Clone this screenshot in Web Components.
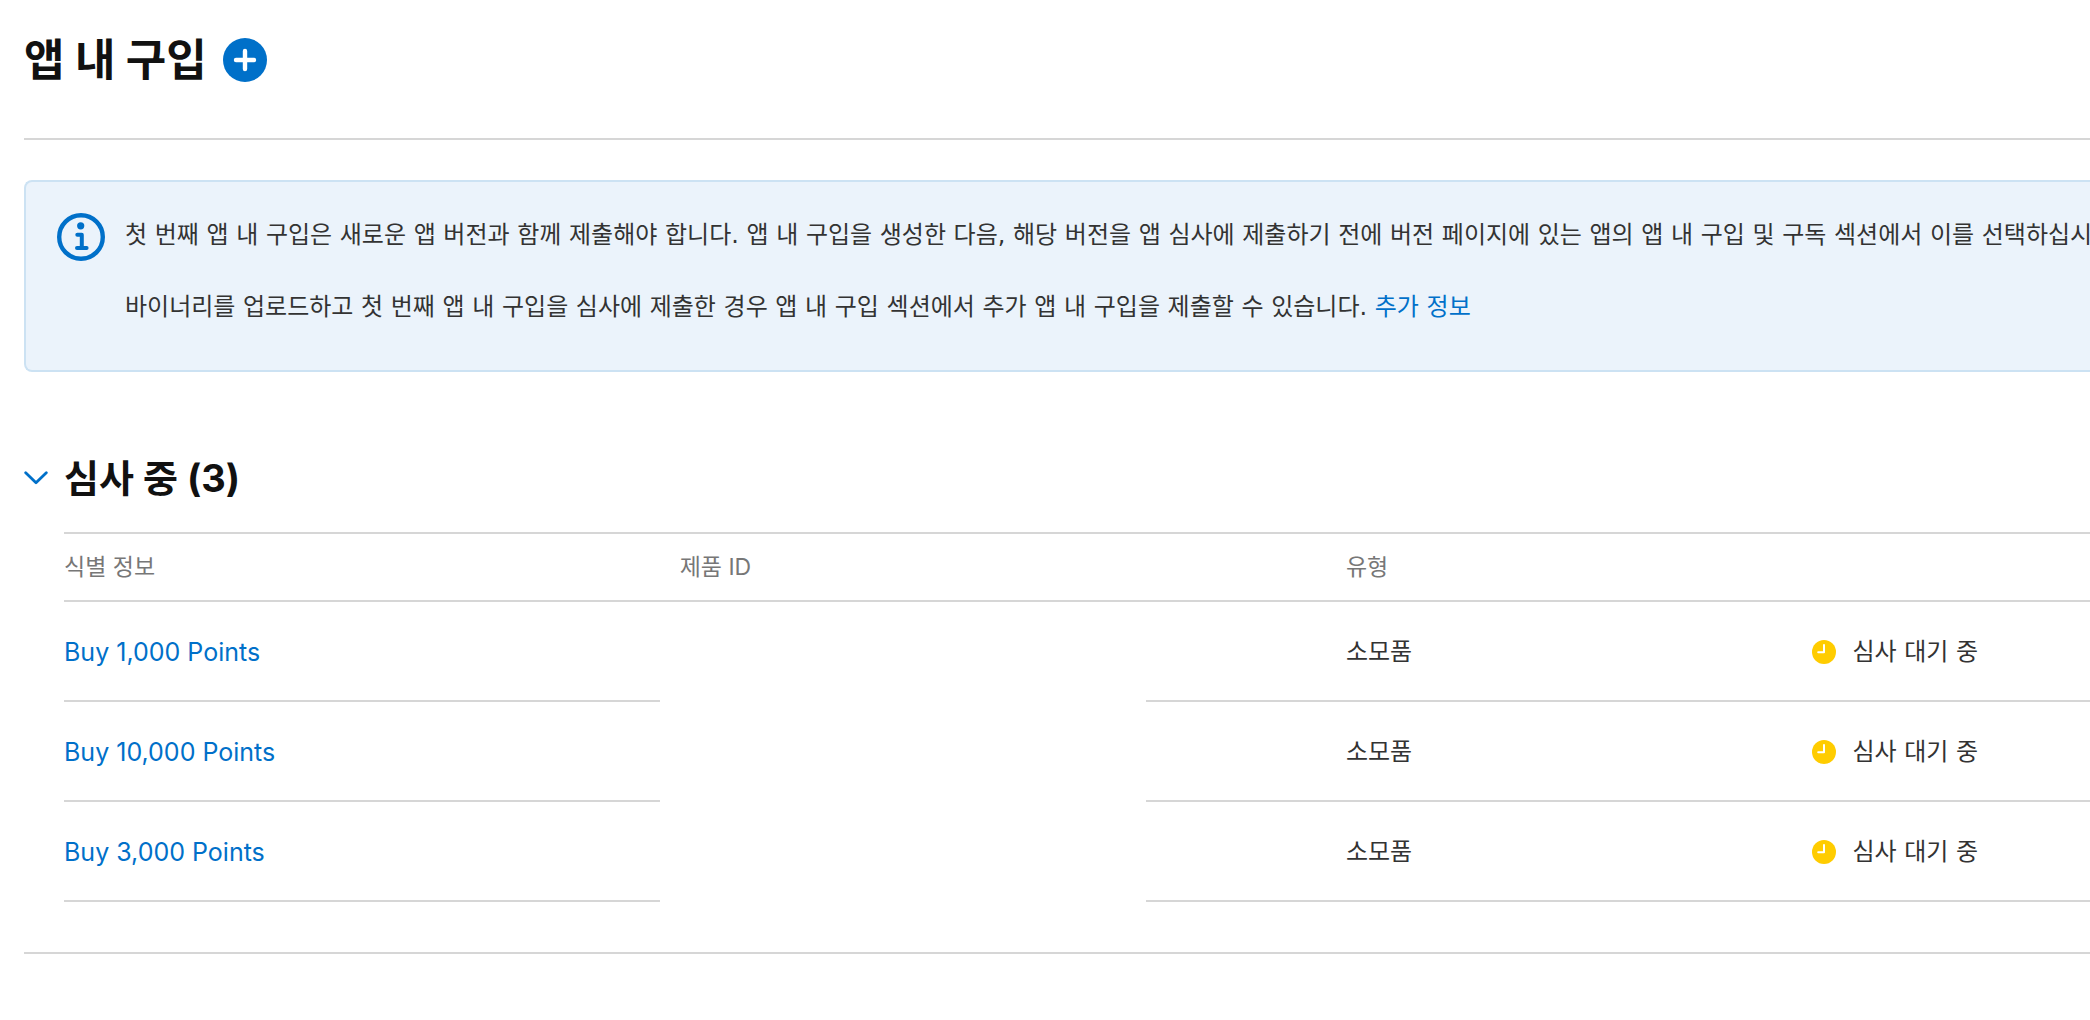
<!DOCTYPE html>
<html lang="ko">
<head>
<meta charset="utf-8">
<meta name="viewport" content="width=device-width, initial-scale=1">
<title>앱 내 구입</title>
<style>
	:root {
		--link-color: #0070c9;
		--line-color: #d6d6d6;
		--text-color: #333;
		--title-color: #111;
		--muted-color: #777;
		--latin-font: Inter, "Noto Sans CJK KR", sans-serif;
	}

	body {
		margin: 0;
		background: #fff;
		color: var(--text-color);
		font: 24px/36px "DejaVu Sans", "Noto Sans CJK KR", sans-serif;
		overflow-x: hidden;
	}

	a {
		color: var(--link-color);
		text-decoration: none;
	}

	main {
		padding: 30px 0 0 24px;
	}
</style>
</head>
<body>

<main>
	<page-heading>앱 내 구입</page-heading>

	<info-banner>
		<p>첫 번째 앱 내 구입은 새로운 앱 버전과 함께 제출해야 합니다. 앱 내 구입을 생성한 다음, 해당 버전을 앱 심사에 제출하기 전에 버전 페이지에 있는 앱의 앱 내 구입 및 구독 섹션에서 이를 선택하십시오.</p>
		<p>바이너리를 업로드하고 첫 번째 앱 내 구입을 심사에 제출한 경우 앱 내 구입 섹션에서 추가 앱 내 구입을 제출할 수 있습니다. <a href="#more">추가 정보</a></p>
	</info-banner>

	<collapsible-section>
		<span slot="title">심사 중 (3)</span>
		<purchase-table></purchase-table>
	</collapsible-section>
</main>

<script>
(function(){

	function makeTemplate(html) {
		const tmpl = document.createElement("template");
		tmpl.innerHTML = html;
		return tmpl;
	}

	const headingTmpl = makeTemplate(`
		<style>
			:host {
				display: flex;
				align-items: center;
				gap: 16px;
				padding-bottom: 48px;
				border-bottom: 2px solid var(--line-color);
			}

			h1 {
				margin: 0;
				color: var(--title-color);
				font-family: var(--latin-font);
				font-size: 44px;
				line-height: 60px;
				font-weight: 700;
			}

			button {
				display: block;
				padding: 0;
				border: 0;
				background: none;
				cursor: pointer;
			}

			svg {
				display: block;
				width: 44px;
				height: 44px;
			}
		</style>

		<h1><slot></slot></h1>
		<button type="button" aria-label="추가">
			<svg viewBox="0 0 44 44" aria-hidden="true">
				<circle cx="22" cy="22" r="22" fill="#0070c9"/>
				<path d="M22 13v18M13 22h18" stroke="#fff" stroke-width="4.4" stroke-linecap="round"/>
			</svg>
		</button>
	`);

	class PageHeading extends HTMLElement {
		constructor() {
			super();
			this.attachShadow({mode: "open"}).appendChild(headingTmpl.content.cloneNode(true));
		}
	}

	const bannerTmpl = makeTemplate(`
		<style>
			:host {
				display: flex;
				gap: 20px;
				margin-top: 40px;
				padding: 31px 0 45px 31px;
				border: 2px solid #cce2f3;
				border-right: 0;
				border-radius: 8px 0 0 8px;
				background: #ebf3fb;
				overflow: hidden;
			}

			svg {
				flex: none;
				width: 48px;
				height: 48px;
			}

			.content {
				display: grid;
				gap: 36px;
				min-width: 0;
				padding-top: 4px;
			}

			/* long lines run on past the window instead of wrapping */
			::slotted(p) {
				margin: 0;
				white-space: nowrap;
			}
		</style>

		<svg viewBox="0 0 48 48" aria-hidden="true" fill="none" stroke="#0070c9">
			<circle cx="24" cy="24" r="21.8" stroke-width="4.4"/>
			<circle cx="23.7" cy="12.8" r="3.6" fill="#0070c9" stroke="none"/>
			<path d="M20.3 21.7h4.5v13M20 34.9h9.6" stroke-width="4" stroke-linecap="round" stroke-linejoin="round"/>
		</svg>
		<div class="content"><slot></slot></div>
	`);

	class InfoBanner extends HTMLElement {
		constructor() {
			super();
			this.attachShadow({mode: "open"}).appendChild(bannerTmpl.content.cloneNode(true));
		}
	}

	const sectionTmpl = makeTemplate(`
		<style>
			:host {
				display: block;
				margin-top: 82px;
				padding-bottom: 50px;
				border-bottom: 2px solid var(--line-color);
			}

			h2 {
				margin: 0;
			}

			button {
				display: flex;
				align-items: center;
				gap: 16px;
				padding: 0;
				border: 0;
				background: none;
				color: var(--title-color);
				font-family: var(--latin-font);
				font-size: 38px;
				line-height: 48px;
				font-weight: 700;
				cursor: pointer;
			}

			svg {
				width: 24px;
				height: 14px;
			}

			.content {
				padding: 30px 0 0 40px;
			}
		</style>

		<h2>
			<button type="button" aria-expanded="true">
				<svg viewBox="0 0 24 14" aria-hidden="true">
					<path d="M1.7 1.7 12 11.7 22.3 1.7" fill="none" stroke="#0070c9" stroke-width="2.8" stroke-linecap="round" stroke-linejoin="round"/>
				</svg>
				<slot name="title"></slot>
			</button>
		</h2>
		<div class="content"><slot></slot></div>
	`);

	class CollapsibleSection extends HTMLElement {
		constructor() {
			super();
			this.attachShadow({mode: "open"}).appendChild(sectionTmpl.content.cloneNode(true));

			this.buttonEl = this.shadowRoot.querySelector("button");
			this.contentEl = this.shadowRoot.querySelector(".content");
			this.buttonEl.addEventListener("click", () => this._toggle());
		}

		_toggle() {
			this.contentEl.hidden = !this.contentEl.hidden;
			this.buttonEl.setAttribute("aria-expanded", String(!this.contentEl.hidden));
		}
	}

	const statusTmpl = makeTemplate(`
		<style>
			:host {
				display: flex;
				align-items: center;
				gap: 16px;
				white-space: nowrap;
			}

			svg {
				flex: none;
				width: 24px;
				height: 24px;
			}
		</style>

		<svg viewBox="0 0 24 24" aria-hidden="true">
			<circle cx="12" cy="12" r="12" fill="#fc0"/>
			<path d="M12 5v7.3H6.2" fill="none" stroke="#fff" stroke-width="2" stroke-linecap="round" stroke-linejoin="round"/>
		</svg>
		<span><slot></slot></span>
	`);

	class StatusLabel extends HTMLElement {
		constructor() {
			super();
			this.attachShadow({mode: "open"}).appendChild(statusTmpl.content.cloneNode(true));
		}
	}

	const tableTmpl = makeTemplate(`
		<style>
			:host {
				display: block;
			}

			table {
				width: 100%;
				table-layout: fixed;
				border-collapse: separate;
				border-spacing: 0;
				border-top: 2px solid var(--line-color);
			}

			.name { width: 29.4%; }
			.product { width: 24%; }
			.type { width: 32.9%; }

			th, td {
				padding: 0;
				border-bottom: 2px solid var(--line-color);
				text-align: left;
			}

			th {
				height: 66px;
				color: var(--muted-color);
				font-family: var(--latin-font);
				font-size: 23px;
				font-weight: 400;
			}

			td {
				height: 96px;
				padding-top: 2px;
			}

			th:nth-child(2), td:nth-child(2) {
				padding-left: 20px;
			}

			th:nth-child(3), td:nth-child(3) {
				padding-left: 200px;
			}

			td:nth-child(2) {
				border-bottom-color: transparent;
			}

			a {
				color: var(--link-color);
				font-family: var(--latin-font);
				font-size: 25px;
				text-decoration: none;
			}
		</style>

		<table>
			<colgroup>
				<col class="name">
				<col class="product">
				<col class="type">
				<col>
			</colgroup>
			<thead>
				<tr>
					<th scope="col">식별 정보</th>
					<th scope="col">제품 ID</th>
					<th scope="col">유형</th>
					<th></th>
				</tr>
			</thead>
			<tbody></tbody>
		</table>
	`);

	const purchases = [
		{name: "Buy 1,000 Points", type: "소모품", status: "심사 대기 중"},
		{name: "Buy 10,000 Points", type: "소모품", status: "심사 대기 중"},
		{name: "Buy 3,000 Points", type: "소모품", status: "심사 대기 중"}
	];

	class PurchaseTable extends HTMLElement {
		constructor() {
			super();
			this.attachShadow({mode: "open"}).appendChild(tableTmpl.content.cloneNode(true));
			this.bodyEl = this.shadowRoot.querySelector("tbody");
		}

		connectedCallback() {
			this._renderRows();
		}

		_renderRows() {
			this.bodyEl.innerHTML = purchases.map(item => `
				<tr>
					<td><a href="#purchase">${item.name}</a></td>
					<td></td>
					<td>${item.type}</td>
					<td><status-label>${item.status}</status-label></td>
				</tr>
			`).join("");
		}
	}

	customElements.define("page-heading", PageHeading);
	customElements.define("info-banner", InfoBanner);
	customElements.define("collapsible-section", CollapsibleSection);
	customElements.define("status-label", StatusLabel);
	customElements.define("purchase-table", PurchaseTable);
}())
</script>
</body>
</html>
